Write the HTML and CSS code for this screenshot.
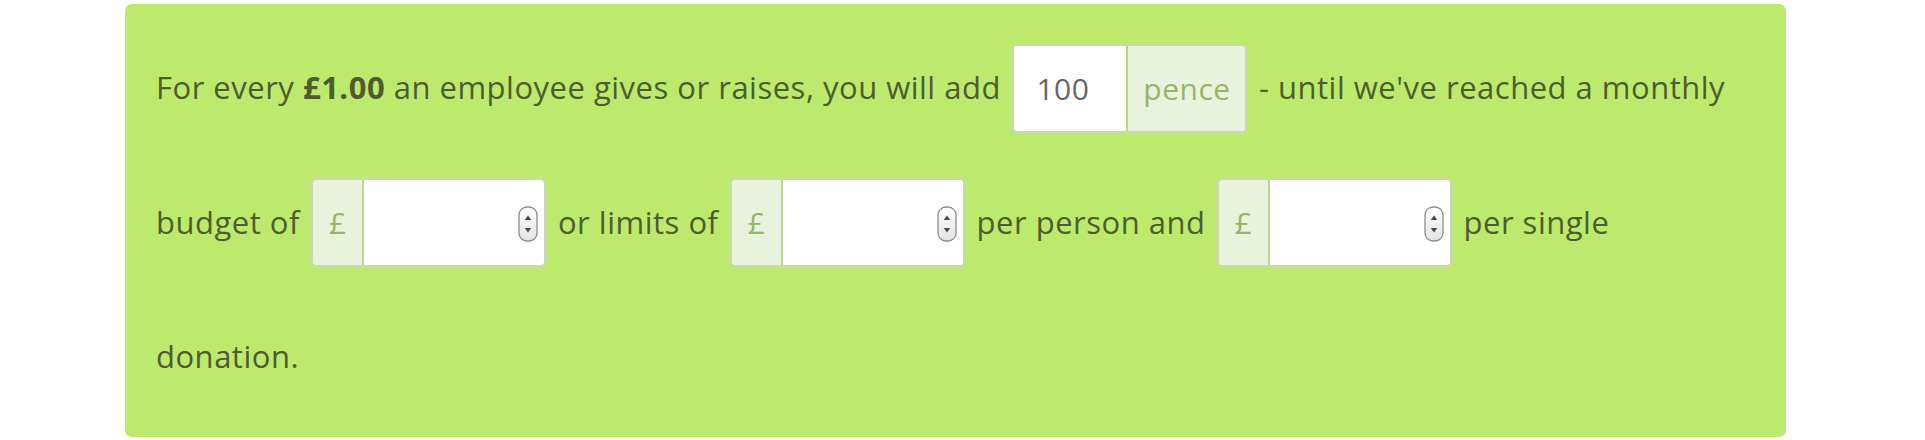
FILE: index.html
```html
<!DOCTYPE html>
<html lang="en">
<head>
<meta charset="utf-8">
<title>Matching</title>
<link rel="stylesheet" href="styles.css">
</head>
<body>
<div class="page">
  <div class="card">
    <p class="copy">For every <strong>£1.00</strong> an employee gives or raises, you will add <span class="group"><span class="field field-num"><input class="input" type="text" value="100"></span><span class="addon addon-right">pence</span></span> - until we've reached a monthly budget of <span class="group"><span class="addon addon-left">£</span><span class="field"><input class="input" type="text" value=""><span class="spin"><svg width="20" height="36" viewBox="0 0 20 36"><defs><linearGradient id="sg" x1="0" y1="0" x2="0" y2="1"><stop offset="0" stop-color="#ffffff"/><stop offset="1" stop-color="#e4e4e4"/></linearGradient></defs><rect x="1" y="1" width="18" height="34" rx="8" fill="url(#sg)" stroke="#8c8c8c" stroke-width="1.3"/><path d="M10 9.5 L13.3 14 L6.7 14 Z" fill="#4a4a4a"/><path d="M10 26.5 L13.3 22 L6.7 22 Z" fill="#4a4a4a"/></svg></span></span></span> or limits of <span class="group"><span class="addon addon-left">£</span><span class="field"><input class="input" type="text" value=""><span class="spin"><svg width="20" height="36" viewBox="0 0 20 36"><rect x="1" y="1" width="18" height="34" rx="8" fill="url(#sg)" stroke="#8c8c8c" stroke-width="1.3"/><path d="M10 9.5 L13.3 14 L6.7 14 Z" fill="#4a4a4a"/><path d="M10 26.5 L13.3 22 L6.7 22 Z" fill="#4a4a4a"/></svg></span></span></span> per person and <span class="group"><span class="addon addon-left">£</span><span class="field"><input class="input" type="text" value=""><span class="spin"><svg width="20" height="36" viewBox="0 0 20 36"><rect x="1" y="1" width="18" height="34" rx="8" fill="url(#sg)" stroke="#8c8c8c" stroke-width="1.3"/><path d="M10 9.5 L13.3 14 L6.7 14 Z" fill="#4a4a4a"/><path d="M10 26.5 L13.3 22 L6.7 22 Z" fill="#4a4a4a"/></svg></span></span></span> per single donation.</p>
  </div>
</div>
</body>
</html>
```
FILE: styles.css
```css
html, body {
  margin: 0;
  padding: 0;
  background: #ffffff;
}

.page {
  padding: 4px 0 0 125px;
}

.card {
  width: 1661px;
  height: 433px;
  box-sizing: border-box;
  background: #bdea6d;
  border-radius: 7px;
  padding: 16px 31px 15px 31px;
}

.copy {
  margin: 0;
  font-family: "Open Sans", "Noto Sans", sans-serif;
  font-size: 31px;
  letter-spacing: 0.5px;
  line-height: 134.5px;
  color: #4e5c2e;
}

.copy strong {
  font-weight: 700;
}

.group {
  display: inline-flex;
  vertical-align: middle;
  margin: 0 2px 5px 2px;
  height: 91px;
  box-sizing: border-box;
  border: 3px solid #c6dca0;
  border-radius: 7px;
  background: #ffffff;
  overflow: hidden;
  line-height: normal;
  letter-spacing: normal;
}

.field {
  display: flex;
  align-items: center;
  width: 180px;
  background: #ffffff;
}

.field-num {
  width: 112px;
}

.input {
  flex: 1;
  min-width: 0;
  height: 100%;
  border: none;
  outline: none;
  background: transparent;
  padding: 0 0 0 22px;
  margin: 0;
  font-family: "Open Sans", "Noto Sans", sans-serif;
  font-size: 30px;
  letter-spacing: 0.5px;
  color: #666666;
}

.spin {
  display: flex;
  width: 20px;
  height: 36px;
  margin: 3px 6px 0 0;
}

.addon {
  display: flex;
  align-items: center;
  justify-content: center;
  box-sizing: border-box;
  background: #e9f2dc;
  color: #98b465;
  font-size: 30px;
  letter-spacing: 0.5px;
}

.addon-left {
  width: 51px;
  border-right: 2px solid #bcd78d;
}

.addon-right {
  width: 119px;
  border-left: 2px solid #bcd78d;
}
```
